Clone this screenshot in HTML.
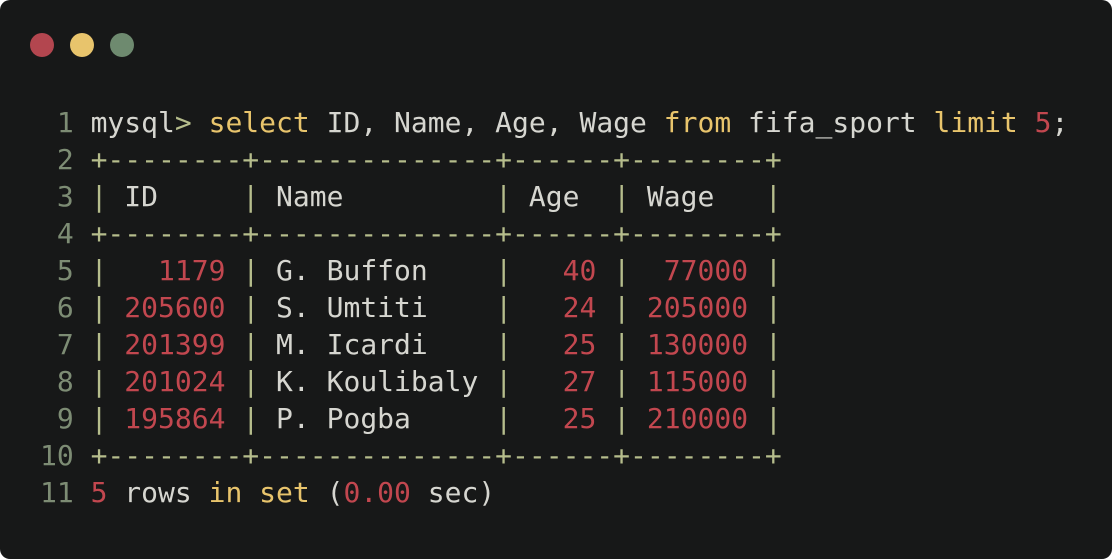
<!DOCTYPE html>
<html><head><meta charset="utf-8"><style>
html,body{margin:0;padding:0;background:#fff;}
.win{position:absolute;left:0;top:0;width:1112px;height:559px;background:#171818;border-radius:10px;overflow:hidden;}
.dot{position:absolute;top:33px;width:24px;height:24px;border-radius:50%;}
pre{position:absolute;left:40px;top:104px;margin:0;font-family:"DejaVu Sans Mono","Liberation Mono",monospace;font-size:28px;line-height:37px;color:#d6d6d0;}
.n{color:#7d8c74}.k{color:#e8c46c}.r{color:#c2474f}.g{color:#b6bd8c}
</style></head><body><div class="win">
<div class="dot" style="left:30px;background:#b3464f"></div>
<div class="dot" style="left:70px;background:#e8c46c"></div>
<div class="dot" style="left:110px;background:#6e8a6f"></div>
<pre><span class="n"> 1</span> mysql<span class="g">&gt;</span> <span class="k">select</span> ID, Name, Age, Wage <span class="k">from</span> fifa_sport <span class="k">limit</span> <span class="r">5</span>;
<span class="n"> 2</span> <span class="g">+--------+--------------+------+--------+</span>
<span class="n"> 3</span> <span class="g">|</span> ID     <span class="g">|</span> Name         <span class="g">|</span> Age  <span class="g">|</span> Wage   <span class="g">|</span>
<span class="n"> 4</span> <span class="g">+--------+--------------+------+--------+</span>
<span class="n"> 5</span> <span class="g">|</span> <span class="r">  1179</span> <span class="g">|</span> G. Buffon    <span class="g">|</span> <span class="r">  40</span> <span class="g">|</span> <span class="r"> 77000</span> <span class="g">|</span>
<span class="n"> 6</span> <span class="g">|</span> <span class="r">205600</span> <span class="g">|</span> S. Umtiti    <span class="g">|</span> <span class="r">  24</span> <span class="g">|</span> <span class="r">205000</span> <span class="g">|</span>
<span class="n"> 7</span> <span class="g">|</span> <span class="r">201399</span> <span class="g">|</span> M. Icardi    <span class="g">|</span> <span class="r">  25</span> <span class="g">|</span> <span class="r">130000</span> <span class="g">|</span>
<span class="n"> 8</span> <span class="g">|</span> <span class="r">201024</span> <span class="g">|</span> K. Koulibaly <span class="g">|</span> <span class="r">  27</span> <span class="g">|</span> <span class="r">115000</span> <span class="g">|</span>
<span class="n"> 9</span> <span class="g">|</span> <span class="r">195864</span> <span class="g">|</span> P. Pogba     <span class="g">|</span> <span class="r">  25</span> <span class="g">|</span> <span class="r">210000</span> <span class="g">|</span>
<span class="n">10</span> <span class="g">+--------+--------------+------+--------+</span>
<span class="n">11</span> <span class="r">5</span> rows <span class="k">in</span> <span class="k">set</span> (<span class="r">0.00</span> sec)</pre>
</div></body></html>
